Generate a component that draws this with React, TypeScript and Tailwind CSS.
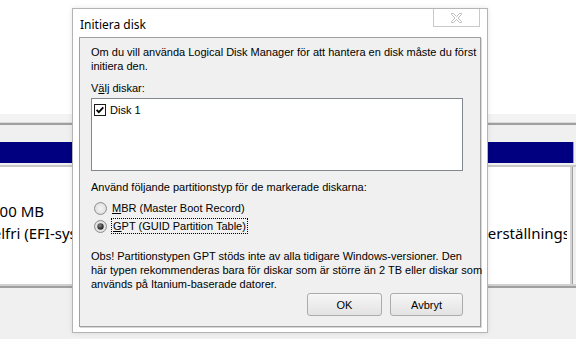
import React from "react";

function Radio({ checked, id }: { checked: boolean; id: string }) {
  return (
    <svg width="13" height="13" viewBox="0 0 13 13" className="shrink-0">
      <defs>
        <radialGradient id={`rg-${id}`} cx="50%" cy="50%" r="55%">
          <stop offset="0%" stopColor="#f4f4f4" />
          <stop offset="70%" stopColor="#e4e4e4" />
          <stop offset="100%" stopColor="#cfcfcf" />
        </radialGradient>
        <radialGradient id={`rd-${id}`} cx="40%" cy="35%" r="70%">
          <stop offset="0%" stopColor="#8a8a8a" />
          <stop offset="60%" stopColor="#3c3c3c" />
          <stop offset="100%" stopColor="#1e1e1e" />
        </radialGradient>
      </defs>
      <circle cx="6.5" cy="6.5" r="6" fill={`url(#rg-${id})`} stroke="#8f8f8f" strokeWidth="1" />
      {checked && <circle cx="6.5" cy="6.5" r="3.2" fill={`url(#rd-${id})`} />}
    </svg>
  );
}

function Check() {
  return (
    <svg width="12" height="12" viewBox="0 0 12 12" className="shrink-0">
      <rect x="0.5" y="0.5" width="11" height="11" fill="#ffffff" stroke="#1a1a1a" />
      <path d="M2.6 5.8 L4.8 8.1 L9.3 3.4" fill="none" stroke="#000" strokeWidth="1.8" />
    </svg>
  );
}

export default function App() {
  return (
    <div className="relative w-[576px] h-[339px] overflow-hidden bg-[#f0f0f0]">
      {/* background window */}
      <div className="flex flex-col h-full font-['Noto_Sans',sans-serif] text-[15px] text-black">
        <div className="h-[114px] bg-white" />
        <div className="h-[8px] bg-[#f3f3f3]" />
        <div className="h-[1px] bg-[#dadada]" />
        <div className="h-[2px] bg-[#a0a0a0]" />
        <div className="h-[17px] bg-[#f0f0f0]" />
        <div className="h-[21px] flex">
          <div className="flex-1 bg-[#000080]" />
          <div className="w-[1px] bg-[#a0a0a0]" />
          <div className="w-[2px] bg-[#f0f0f0]" />
        </div>
        <div className="h-[2px] bg-[#f0f0f0]" />
        <div className="h-[2px] bg-[#c8c8c8]" />
        <div className="h-[117px] flex bg-white">
          <div className="w-[300px] overflow-hidden pt-[33px] leading-[22px] whitespace-nowrap">
            <div className="ml-[-9px]">100 MB</div>
            <div className="ml-[-15px]">Felfri (EFI-systempartition)</div>
          </div>
          <div className="w-[267px] overflow-hidden pt-[33px] pl-[129px] leading-[22px] whitespace-nowrap">
            <div>450 MB</div>
            <div>Felfri (Återställningspartition)</div>
          </div>
          <div className="w-[3px] bg-white" />
          <div className="w-[2px] bg-[#d4d4d4]" />
          <div className="w-[1px] bg-[#a0a0a0]" />
          <div className="w-[3px] bg-[#f0f0f0]" />
        </div>
        <div className="h-[2px] bg-[#d0d0d0]" />
        <div className="h-[2px] bg-[#a0a0a0]" />
        <div className="flex-1 bg-[#f0f0f0]" />
      </div>

      {/* dialog */}
      <div className="absolute left-[72px] top-[8px] w-[416px] h-[325px] bg-white border border-[#b4b4b4] shadow-[0_0_5px_rgba(0,0,0,0.1)] flex flex-col px-[6px] pb-[5px]">
        <div className="relative h-[28px] pt-[3px] flex items-center">
          <span className="pl-[1px] text-[12px] font-['Noto_Sans',sans-serif] text-black">Initiera disk</span>
          <div className="absolute right-[1px] top-0 w-[47px] h-[18px] border border-t-0 border-[#c9c9c9] bg-white flex items-center justify-center">
            <svg width="11" height="10" viewBox="0 0 11 10">
              <polygon
                points="0.5,0.5 2.5,0.5 5.5,3.5 8.5,0.5 10.5,0.5 10.5,1.5 7,5 10.5,8.5 10.5,9.5 8.5,9.5 5.5,6.5 2.5,9.5 0.5,9.5 0.5,8.5 4,5 0.5,1.5"
                fill="#ffffff"
                stroke="#bdbdbd"
                strokeWidth="1"
              />
            </svg>
          </div>
        </div>
        <div className="flex-1 bg-[#f0f0f0] border border-[#a0a0a0] shadow-[1px_1px_0_#d8d8d8]">
          <div className="pt-[7px] pl-[11px] pr-[17px] flex flex-col text-[11px] leading-[14px] text-black font-['Liberation_Sans',Arial,sans-serif] whitespace-nowrap">
            <p>
              Om du vill använda Logical Disk Manager för att hantera en disk måste du först
              <br />
              initiera den.
            </p>
            <p className="mt-[8px]">
              V<span className="underline">ä</span>lj diskar:
            </p>
            <div className="mt-[3px] h-[73px] border border-[#828790] bg-white">
              <div className="pt-[4px] pl-[2px] flex items-center gap-[4px]">
                <Check />
                <span>Disk 1</span>
              </div>
            </div>
            <p className="mt-[9px]">Använd följande partitionstyp för de markerade diskarna:</p>
            <div className="mt-[5px] flex flex-col">
              <div className="h-[18px] pl-[3px] flex items-center gap-[4px]">
                <Radio checked={false} id="mbr" />
                <span className="px-[1px]">
                  <span className="underline">M</span>BR (Master Boot Record)
                </span>
              </div>
              <div className="h-[18px] pl-[3px] flex items-center gap-[4px]">
                <Radio checked={true} id="gpt" />
                <span className="px-[1px] border border-dotted border-black">
                  <span className="underline">G</span>PT (GUID Partition Table)
                </span>
              </div>
            </div>
            <p className="mt-[14px]">
              Obs! Partitionstypen GPT stöds inte av alla tidigare Windows-versioner. Den
              <br />
              här typen rekommenderas bara för diskar som är större än 2 TB eller diskar som
              <br />
              används på Itanium-baserade datorer.
            </p>
            <div className="mt-[2px] flex justify-end gap-[8px]">
              <button className="w-[75px] h-[23px] rounded-[3px] border border-[#acacac] bg-linear-to-b from-[#f6f6f6] to-[#e3e3e3] text-[11px] text-black">
                OK
              </button>
              <button className="w-[73px] h-[23px] rounded-[3px] border border-[#acacac] bg-linear-to-b from-[#f6f6f6] to-[#e3e3e3] text-[11px] text-black">
                Avbryt
              </button>
            </div>
          </div>
        </div>
      </div>
    </div>
  );
}
